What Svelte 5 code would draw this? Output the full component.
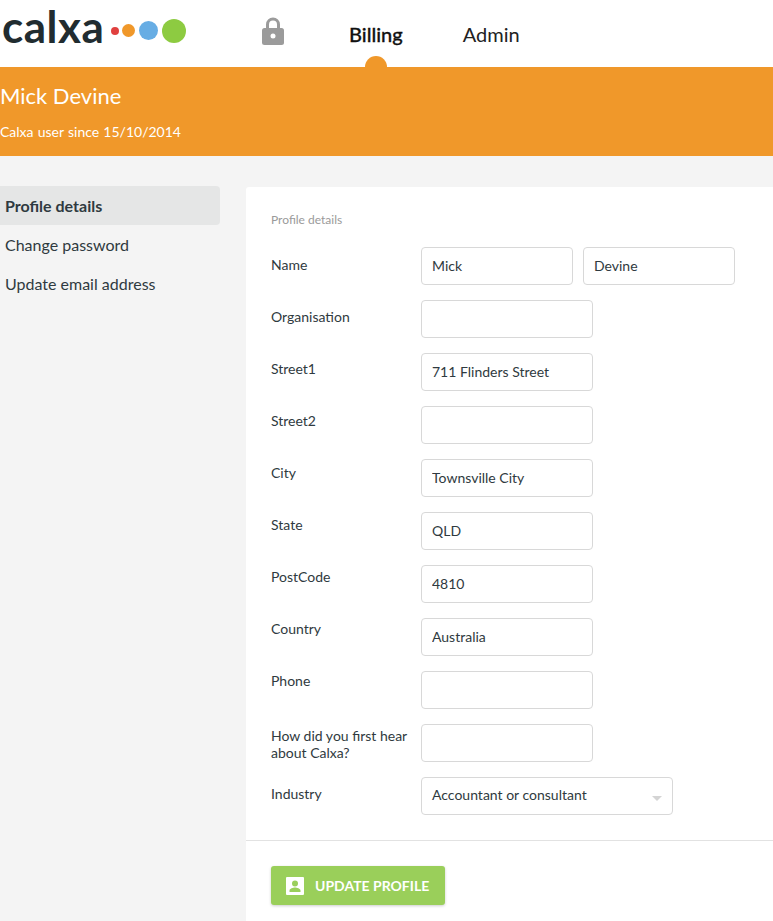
<script>
  const fields = [
    { label: "Organisation", value: "" },
    { label: "Street1", value: "711 Flinders Street" },
    { label: "Street2", value: "" },
    { label: "City", value: "Townsville City" },
    { label: "State", value: "QLD" },
    { label: "PostCode", value: "4810" },
    { label: "Country", value: "Australia" },
    { label: "Phone", value: "" },
  ];
</script>

<header class="topbar">
  <div class="logo">
    <span class="wordmark">calxa</span>
    <i class="dot red"></i>
    <i class="dot orange"></i>
    <i class="dot blue"></i>
    <i class="dot green"></i>
  </div>
  <svg class="lock" width="24" height="30" viewBox="0 0 24 30">
    <path d="M5 13V8.500a7 7 0 0 1 14 0V13h-3V8.500a4 4 0 0 0-8 0V13z" fill="#9b9b9b" />
    <rect x="1" y="12" width="22" height="17" rx="2.500" fill="#9b9b9b" />
    <circle cx="12" cy="20" r="2.500" fill="#fff" />
  </svg>
  <nav class="tabs">
    <a class="tab active">Billing</a>
    <a class="tab">Admin</a>
  </nav>
</header>

<section class="banner">
  <h1>Mick Devine</h1>
  <p>Calxa user since 15/10/2014</p>
</section>

<main class="content">
  <aside class="sidebar">
    <a class="side-item selected">Profile details</a>
    <a class="side-item">Change password</a>
    <a class="side-item">Update email address</a>
  </aside>

  <div class="card">
    <div class="form">
      <h2>Profile details</h2>

      <div class="row">
        <label style="padding-top: 9px">Name</label>
        <input class="half" value="Mick" />
        <input class="half" value="Devine" />
      </div>

      <!-- labels drift up a pixel per row against the inputs -->
      {#each fields as f, i}
        <div class="row">
          <label style="padding-top: {8 - i}px">{f.label}</label>
          <input value={f.value} />
        </div>
      {/each}

      <div class="row">
        <label class="two-line">How did you first hear about Calxa?</label>
        <input />
      </div>

      <div class="row">
        <label>Industry</label>
        <div class="select">
          Accountant or consultant
          <span class="caret"></span>
        </div>
      </div>
    </div>

    <div class="actions">
      <button class="update">
        <svg width="18" height="18" viewBox="0 0 18 18">
          <path fill="#fff" fill-rule="evenodd" d="M1 0h16a1 1 0 0 1 1 1v16a1 1 0 0 1-1 1H1a1 1 0 0 1-1-1V1a1 1 0 0 1 1-1zM9 3.500a3 3 0 1 0 0 6 3 3 0 0 0 0-6zM3.500 15h11v-1.500c0-2-3.700-3-5.500-3s-5.500 1-5.500 3z" />
        </svg>
        UPDATE PROFILE
      </button>
    </div>
  </div>
</main>

<style>
  :global(body) {
    margin: 0;
    background: #f4f4f4;
    font-family: Lato, "Open Sans", sans-serif;
    color: #2d3436;
  }

  .topbar {
    display: flex;
    align-items: center;
    height: 67px;
    background: #fff;
    overflow: visible;
  }

  .logo {
    display: flex;
    align-self: flex-start;
    align-items: center;
    width: 261px;
    height: 61px;
  }

  .wordmark {
    width: 102px;
    margin: 0 7px 8px 2px;
    font-size: 44px;
    font-weight: 700;
    letter-spacing: 0.5px;
    color: #212c30;
    line-height: 53px;
  }

  .dot {
    display: block;
    border-radius: 50%;
  }
  .red { width: 8px; height: 8px; background: #e0403f; margin-right: 3px; }
  .orange { width: 13px; height: 13px; background: #f0982a; margin-right: 4px; }
  .blue { width: 19px; height: 19px; background: #67ade4; margin-right: 4px; }
  .green { width: 24px; height: 24px; background: #8dcb41; }

  .lock {
    flex: none;
    margin-top: -6px;
  }

  .tabs {
    display: flex;
    margin: 2px 0 0 64px;
    gap: 60px;
  }

  .tab {
    position: relative;
    font-size: 20px;
    color: #222;
    line-height: 71px;
  }

  .tab.active {
    font-weight: 500;
    color: #111;
    -webkit-text-stroke: 0.3px #111;
  }

  .tab.active::after {
    content: "";
    position: absolute;
    left: 50%;
    bottom: 3px;
    width: 22px;
    height: 11px;
    margin-left: -11px;
    border-radius: 11px 11px 0 0;
    background: #f0982a;
  }

  .banner {
    height: 89px;
    background: #f0982a;
    color: #fff;
    box-sizing: border-box;
    padding: 15px 0 0;
  }

  .banner h1 {
    margin: 0;
    font-size: 22px;
    font-weight: 400;
    line-height: 28px;
  }

  .banner p {
    margin: 12px 0 0;
    font-size: 14px;
    line-height: 20px;
    word-spacing: 0.6px;
  }

  .content {
    display: flex;
    align-items: flex-start;
    padding-top: 30px;
  }

  .sidebar {
    width: 220px;
    flex: none;
    margin-right: 26px;
  }

  .side-item {
    display: block;
    height: 39px;
    line-height: 39px;
    padding-left: 5px;
    font-size: 16px;
    color: #2f3a40;
    border-radius: 0 4px 4px 0;
  }

  .side-item.selected {
    background: #e5e6e6;
    font-weight: 700;
  }

  .card {
    flex: 1;
    margin-top: 1px;
    height: 735px;
    background: #fff;
    border-radius: 3px 0 0 0;
    overflow: hidden;
  }

  .form {
    padding: 26px 0 0 25px;
    height: 654px;
    box-sizing: border-box;
    border-bottom: 1px solid #e2e2e2;
  }

  h2 {
    margin: 0 0 20px;
    font-size: 12px;
    font-weight: 400;
    line-height: 14px;
    color: #9a9a9a;
  }

  .row {
    display: flex;
    align-items: flex-start;
    margin-bottom: 15px;
    font-size: 14px;
  }

  label {
    width: 150px;
    flex: none;
    line-height: 17px;
    padding-top: 8px;
    color: #2f3a40;
  }

  .two-line {
    width: 146px;
    margin-right: 4px;
    padding-top: 3px;
  }

  input,
  .select {
    box-sizing: border-box;
    width: 172px;
    height: 38px;
    padding: 0 10px 2px;
    border: 1px solid #d8d8d8;
    border-radius: 4px;
    background: #fff;
    font: inherit;
    color: #2f3a40;
    outline: none;
  }

  input.half {
    width: 152px;
    margin-right: 10px;
  }

  .select {
    position: relative;
    width: 252px;
    line-height: 34px;
  }

  .caret {
    position: absolute;
    right: 10px;
    top: 18px;
    border-left: 5px solid transparent;
    border-right: 5px solid transparent;
    border-top: 5px solid #d4d4d4;
  }

  .actions {
    padding: 25px 0 0 25px;
  }

  .update {
    display: flex;
    align-items: center;
    gap: 11px;
    width: 174px;
    height: 39px;
    padding: 0 0 0 15px;
    border: 0;
    border-radius: 3px;
    background: #9acf5a;
    box-shadow: 0 1px 3px rgba(0, 0, 0, 0.2);
    color: #fff;
    font: 700 14px Lato, sans-serif;
    white-space: nowrap;
  }
</style>
